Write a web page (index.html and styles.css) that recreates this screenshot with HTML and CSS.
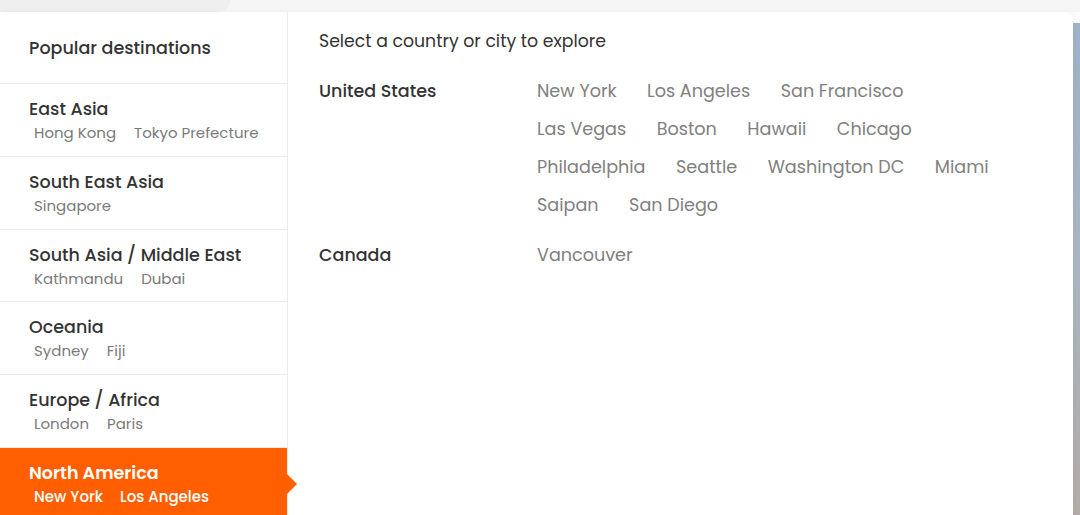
FILE: index.html
```html
<!DOCTYPE html>
<html lang="en">
<head>
<meta charset="utf-8">
<title>Popular destinations</title>
<link rel="stylesheet" href="styles.css">
</head>
<body>
<header class="topbar">
  <div class="pill"></div>
</header>
<div class="hero"></div>

<div class="dropdown">
  <aside class="sidebar">
    <div class="side-head">Popular destinations</div>
    <div class="region">
      <div class="region-title">East Asia</div>
      <div class="region-cities"><span>Hong Kong</span><span>Tokyo Prefecture</span></div>
    </div>
    <div class="region">
      <div class="region-title">South East Asia</div>
      <div class="region-cities"><span>Singapore</span></div>
    </div>
    <div class="region">
      <div class="region-title">South Asia / Middle East</div>
      <div class="region-cities"><span>Kathmandu</span><span>Dubai</span></div>
    </div>
    <div class="region">
      <div class="region-title">Oceania</div>
      <div class="region-cities"><span>Sydney</span><span>Fiji</span></div>
    </div>
    <div class="region">
      <div class="region-title">Europe / Africa</div>
      <div class="region-cities"><span>London</span><span>Paris</span></div>
    </div>
    <div class="region active">
      <div class="region-title">North America</div>
      <div class="region-cities"><span>New York</span><span>Los Angeles</span></div>
    </div>
  </aside>
  <section class="content">
    <div class="prompt">Select a country or city to explore</div>
    <div class="country">
      <div class="country-name">United States</div>
      <div class="cities">
        <span>New York</span><span>Los Angeles</span><span>San Francisco</span>
        <span class="br"></span>
        <span>Las Vegas</span><span>Boston</span><span>Hawaii</span><span>Chicago</span>
        <span class="br"></span>
        <span>Philadelphia</span><span>Seattle</span><span>Washington DC</span><span>Miami</span>
        <span class="br"></span>
        <span>Saipan</span><span>San Diego</span>
      </div>
    </div>
    <div class="country">
      <div class="country-name">Canada</div>
      <div class="cities"><span>Vancouver</span></div>
    </div>
  </section>
</div>
</body>
</html>
```
FILE: styles.css
```css
* { box-sizing: border-box; }
html, body {
  margin: 0;
  height: 100%;
  overflow: hidden;
}
body {
  font-family: "Poppins", "Open Sans", "Liberation Sans", sans-serif;
  background: #fff;
  position: relative;
}
.topbar {
  height: 23px;
  background: linear-gradient(#f6f6f6 0 12px, #fcfcfc 12px);
}
.pill {
  width: 230px;
  height: 12px;
  background: #efefef;
  border-bottom-right-radius: 22px;
}
.hero {
  height: calc(100% - 23px);
  background: linear-gradient(180deg, #9db3c9 0%, #a9b5c2 50%, #b3aba8 100%);
}
.dropdown {
  position: absolute;
  top: 12px;
  left: 0;
  width: 1073px;
  bottom: -20px;
  background: #fff;
  border-top-right-radius: 8px;
  display: flex;
  box-shadow: 0 0 6px rgba(0,0,0,0.04);
}
.sidebar {
  width: 288px;
  flex: none;
  border-right: 1px solid #ececec;
}
.side-head {
  height: 72px;
  padding: 24px 0 0 29px;
  font-size: 17.5px;
  line-height: 24px;
  font-weight: 550;
  color: #333;
  border-bottom: 1px solid #ececec;
}
.region {
  height: 72.8px;
  padding: 13px 0 0 29px;
  border-bottom: 1px solid #ececec;
  position: relative;
}
.region-title {
  font-size: 17.5px;
  line-height: 24px;
  font-weight: 550;
  color: #333;
}
.region-cities {
  display: flex;
  gap: 18px;
  padding-left: 5px;
  font-size: 15px;
  line-height: 24px;
  color: #7a7a7a;
}
.region.active {
  background: #ff5f00;
  border-bottom: none;
}
.region.active .region-title {
  color: #fff;
  font-weight: 600;
}
.region.active .region-cities {
  color: #fff;
  font-weight: 550;
  gap: 17px;
}
.region.active::after {
  content: "";
  position: absolute;
  right: -10px;
  top: 26px;
  border-left: 10px solid #ff5f00;
  border-top: 10px solid transparent;
  border-bottom: 10px solid transparent;
}
.content {
  flex: 1;
  padding: 17px 0 0 31px;
}
.prompt {
  font-size: 17.3px;
  line-height: 24px;
  color: #333;
  margin-bottom: 19px;
}
.country {
  display: flex;
  margin-bottom: 12px;
}
.country-name {
  width: 218px;
  flex: none;
  font-size: 17.5px;
  line-height: 38px;
  font-weight: 550;
  color: #333;
}
.cities {
  display: flex;
  flex-wrap: wrap;
  column-gap: 30.5px;
  width: 500px;
  font-size: 17.6px;
  line-height: 38px;
  color: #808080;
}
.cities .br {
  flex-basis: 100%;
  height: 0;
}
```
